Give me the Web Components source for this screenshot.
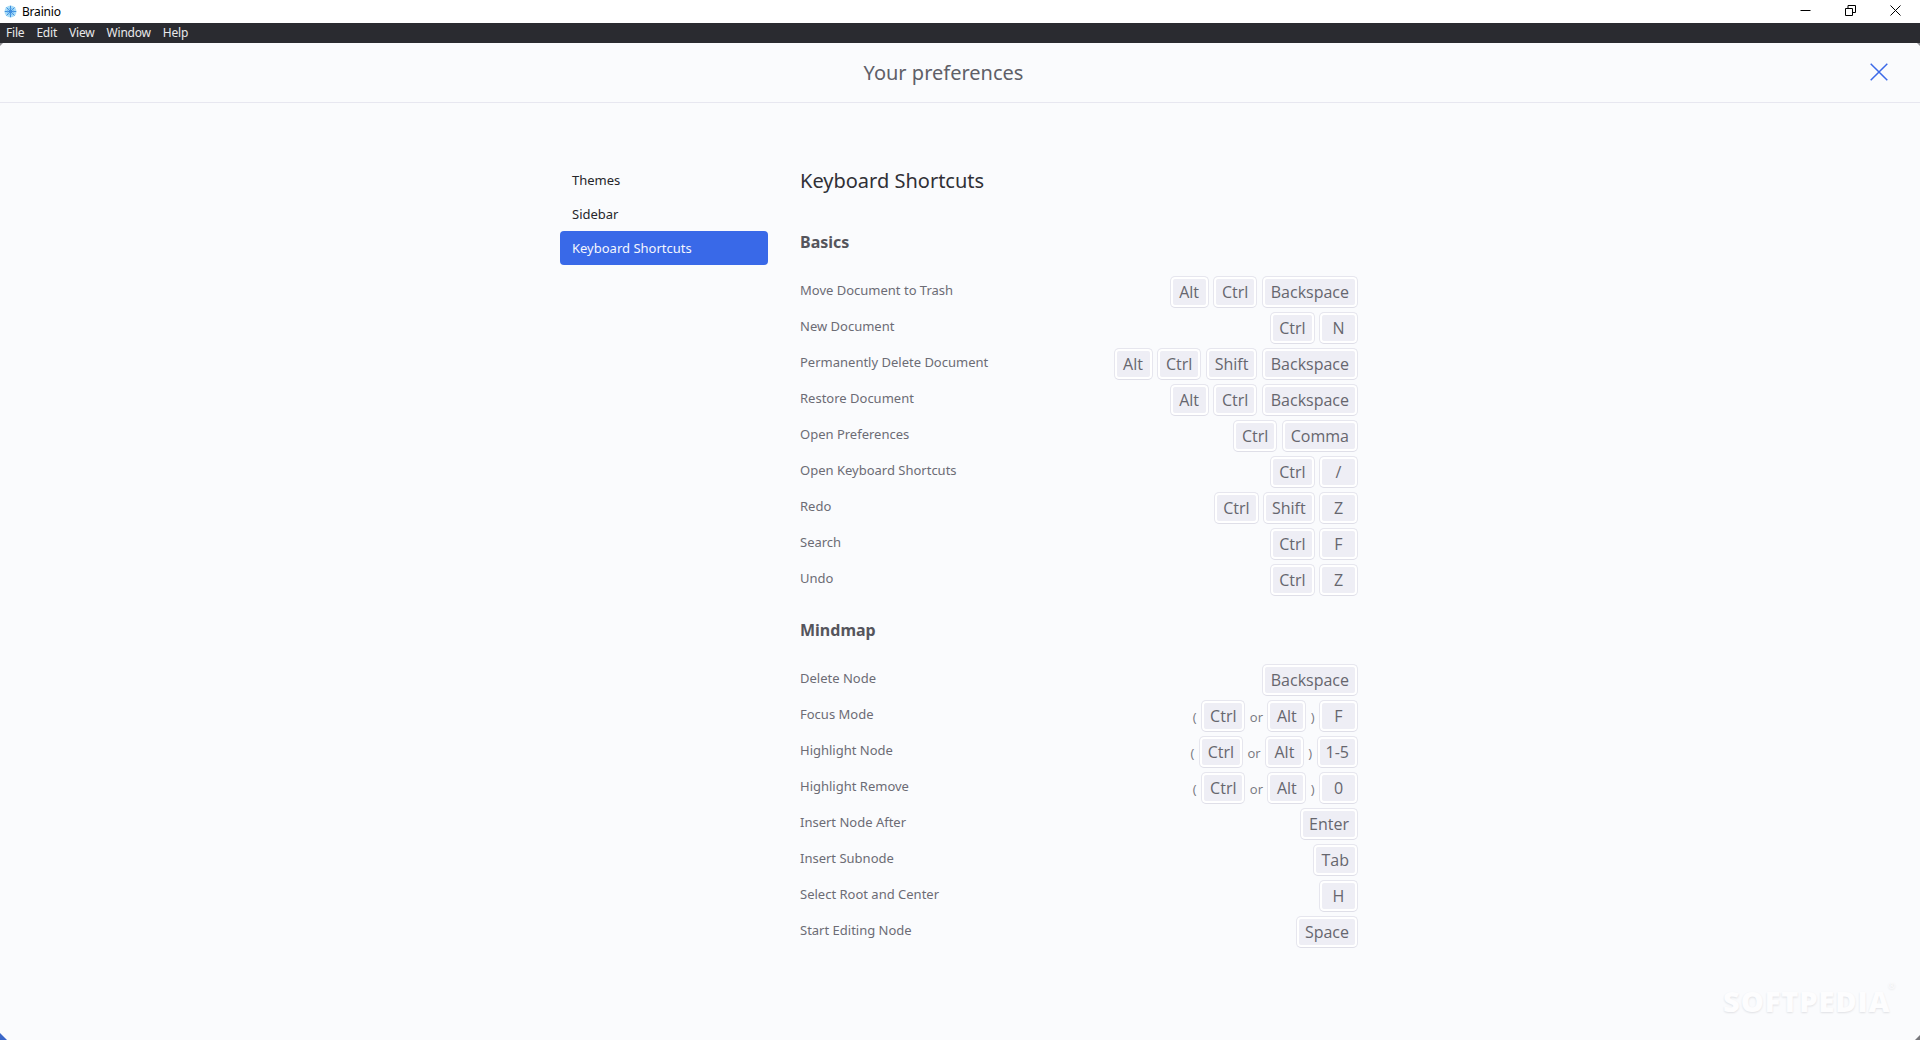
<!DOCTYPE html>
<html lang="en"><head><meta charset="utf-8"><title>Brainio</title>
<style>
html,body{margin:0;padding:0;height:1040px;overflow:hidden;background:#fff;font-family:"Noto Sans","Open Sans",sans-serif}
body{display:flex;flex-direction:column}
</style></head><body>
<app-titlebar>Brainio</app-titlebar>
<app-menubar><span>File</span><span>Edit</span><span>View</span><span>Window</span><span>Help</span></app-menubar>
<prefs-window>
  <prefs-header>Your preferences</prefs-header>
  <prefs-body>
    <prefs-nav>
      <nav-item>Themes</nav-item>
      <nav-item>Sidebar</nav-item>
      <nav-item active>Keyboard Shortcuts</nav-item>
    </prefs-nav>
    <prefs-content>
      <page-title>Keyboard Shortcuts</page-title>
      <shortcut-section heading="Basics">
        <shortcut-row label="Move Document to Trash"><key-cap>Alt</key-cap><key-cap>Ctrl</key-cap><key-cap>Backspace</key-cap></shortcut-row>
        <shortcut-row label="New Document"><key-cap>Ctrl</key-cap><key-cap>N</key-cap></shortcut-row>
        <shortcut-row label="Permanently Delete Document"><key-cap>Alt</key-cap><key-cap>Ctrl</key-cap><key-cap>Shift</key-cap><key-cap>Backspace</key-cap></shortcut-row>
        <shortcut-row label="Restore Document"><key-cap>Alt</key-cap><key-cap>Ctrl</key-cap><key-cap>Backspace</key-cap></shortcut-row>
        <shortcut-row label="Open Preferences"><key-cap>Ctrl</key-cap><key-cap>Comma</key-cap></shortcut-row>
        <shortcut-row label="Open Keyboard Shortcuts"><key-cap>Ctrl</key-cap><key-cap>/</key-cap></shortcut-row>
        <shortcut-row label="Redo"><key-cap>Ctrl</key-cap><key-cap>Shift</key-cap><key-cap>Z</key-cap></shortcut-row>
        <shortcut-row label="Search"><key-cap>Ctrl</key-cap><key-cap>F</key-cap></shortcut-row>
        <shortcut-row label="Undo"><key-cap>Ctrl</key-cap><key-cap>Z</key-cap></shortcut-row>
      </shortcut-section>
      <shortcut-section heading="Mindmap">
        <shortcut-row label="Delete Node"><key-cap>Backspace</key-cap></shortcut-row>
        <shortcut-row label="Focus Mode"><key-sep>(</key-sep><key-cap>Ctrl</key-cap><key-sep>or</key-sep><key-cap>Alt</key-cap><key-sep>)</key-sep><key-cap>F</key-cap></shortcut-row>
        <shortcut-row label="Highlight Node"><key-sep>(</key-sep><key-cap>Ctrl</key-cap><key-sep>or</key-sep><key-cap>Alt</key-cap><key-sep>)</key-sep><key-cap>1-5</key-cap></shortcut-row>
        <shortcut-row label="Highlight Remove"><key-sep>(</key-sep><key-cap>Ctrl</key-cap><key-sep>or</key-sep><key-cap>Alt</key-cap><key-sep>)</key-sep><key-cap>0</key-cap></shortcut-row>
        <shortcut-row label="Insert Node After"><key-cap>Enter</key-cap></shortcut-row>
        <shortcut-row label="Insert Subnode"><key-cap>Tab</key-cap></shortcut-row>
        <shortcut-row label="Select Root and Center"><key-cap>H</key-cap></shortcut-row>
        <shortcut-row label="Start Editing Node"><key-cap>Space</key-cap></shortcut-row>
      </shortcut-section>
    </prefs-content>
  </prefs-body>
  <soft-mark>SOFTPEDIA<sup>®</sup></soft-mark>
</prefs-window>
<script>
function def(name, html, init){
  customElements.define(name, class extends HTMLElement{
    constructor(){super();this.attachShadow({mode:"open"}).innerHTML=html;}
    connectedCallback(){ if(init) init(this); }
  });
}
def("app-titlebar",`<style>
:host{display:flex;align-items:center;height:23px;flex:none;background:#fff;color:#000;font:12px/23px "Noto Sans",sans-serif}
.logo{width:13px;height:13px;margin:-1px 5px 0 4px;flex:none}
.t{flex:1;letter-spacing:-.2px}
.b{width:45px;height:23px;display:flex;align-items:center;justify-content:center}
.b svg{width:11px;height:11px;display:block;margin-top:-3px}
.w{display:flex;padding-right:2.5px}
</style>
<svg class="logo" viewBox="0 0 13 13"><circle cx="6.5" cy="6.5" r="6" fill="#a8dcf7"/><path d="M6.5 .8v11.400M.8 6.500h11.400M2.500 2.500l8 8M10.500 2.500l-8 8" stroke="#3f8fe0" stroke-width="1" fill="none"/><circle cx="6.500" cy="6.500" r="3" fill="none" stroke="#5aa6ea" stroke-width=".8"/></svg>
<span class="t"><slot></slot></span>
<div class="w">
<div class="b"><svg viewBox="0 0 11 11"><path d="M.5 5.500h10" stroke="#000" fill="none"/></svg></div>
<div class="b"><svg viewBox="0 0 11 11"><path d="M.5 3.500h7v7h-7zM3 3.500V.5h7.500v7H7.500" stroke="#000" fill="none"/></svg></div>
<div class="b"><svg viewBox="0 0 11 11"><path d="M.5 .5l10 10M10.500 .5l-10 10" stroke="#000" fill="none"/></svg></div>
</div>`);
def("app-menubar",`<style>
:host{display:flex;height:20px;flex:none;background:#2a2b30;color:#e8e8ea;font:12px/20px "Noto Sans",sans-serif;padding-left:6px;gap:12px;letter-spacing:-.2px}
::slotted(span){display:block}
</style><slot></slot>`);
def("prefs-window",`<style>
:host{display:flex;flex-direction:column;flex:1;min-height:0;background:#fafbfd;position:relative;overflow:hidden}
i{position:absolute;display:block}
.tl{left:0;top:0;width:3px;height:3px;background:#8f8f94;clip-path:polygon(0 0,100% 0,0 100%)}
.tr{right:0;top:0;width:3px;height:3px;background:#8f8f94;clip-path:polygon(0 0,100% 0,100% 100%)}
.br{right:0;bottom:0;width:5px;height:5px;background:#77777c;clip-path:polygon(100% 0,100% 100%,0 100%)}
.bl{left:0;bottom:0;width:7px;height:7px;background:#3a66c8;clip-path:polygon(0 0,100% 100%,0 100%)}
</style><slot></slot><i class="tl"></i><i class="tr"></i><i class="br"></i><i class="bl"></i>`);
def("prefs-header",`<style>
:host{display:flex;align-items:center;justify-content:center;height:60px;flex:none;box-sizing:border-box;border-bottom:1px solid #e7e7f0;color:#5f5f68;font:20px "Noto Sans",sans-serif;position:relative}
svg{position:absolute;right:32px;top:20px;width:18px;height:18px}
span{display:block;margin-left:-33px}
</style><span><slot></slot></span><svg viewBox="0 0 18 18"><path d="M.7 .7l16.600 16.600M17.300 .7L.7 17.300" stroke="#3b69e8" stroke-width="1.500" fill="none"/></svg>`);
def("prefs-body",`<style>
:host{display:flex;flex:1;min-height:0;padding:60px 0 0 560px;gap:32px}
</style><slot></slot>`);
def("prefs-nav",`<style>
:host{display:block;width:208px;flex:none}
</style><slot></slot>`);
def("nav-item",`<style>
:host{display:block;height:34px;box-sizing:border-box;padding:0 12px;border-radius:4px;color:#26262b;font:13px/34px "Noto Sans",sans-serif}
:host([active]){background:#3969e8;color:#f4f6fe}
</style><slot></slot>`);
def("prefs-content",`<style>
:host{display:block;width:558px;flex:none}
</style><slot></slot>`);
def("page-title",`<style>
:host{display:block;height:36px;margin-bottom:28px;color:#303036;font:20px/36px "Noto Sans",sans-serif}
</style><slot></slot>`);
def("shortcut-section",`<style>
:host{display:block;margin-top:17px}
h2{margin:0 0 17px;color:#55555c;font:700 16px/30px "Noto Sans",sans-serif}
</style><h2></h2><slot></slot>`, el=>{el.shadowRoot.querySelector("h2").textContent=el.getAttribute("heading");});
def("shortcut-row",`<style>
:host{display:flex;align-items:center;height:36px}
.l{flex:1;color:#6c6c75;font:13px/32px "Noto Sans",sans-serif;margin-top:-4px}
.k{display:flex;align-items:center;gap:4.4px}
</style><span class="l"></span><div class="k"><slot></slot></div>`, el=>{el.shadowRoot.querySelector(".l").textContent=el.getAttribute("label");});
def("key-cap",`<style>
:host{display:block;box-sizing:border-box;height:32px;min-width:39px;padding:0 8px;text-align:center;background:#eeeef5;border:1px solid #e6e6ee;border-bottom-color:#dfdfe8;border-radius:5px;box-shadow:inset 0 0 0 2px #fff;color:#66666e;font:16px/30px "Open Sans",sans-serif}
</style><slot></slot>`);
def("key-sep",`<style>
:host{display:block;color:#77777f;font:13px/32px "Open Sans",sans-serif;margin-top:1px}
</style><slot></slot>`);
def("soft-mark",`<style>
:host{position:absolute;left:1723px;top:943px;color:#fdfdfe;font:800 29px/30px "Open Sans",sans-serif;letter-spacing:.9px;text-shadow:0 1px 2px #dfe0e4}
::slotted(sup){position:absolute;left:165px;top:-6px;font-size:9px;line-height:12px;font-weight:400}
</style><slot></slot>`);
</script>
</body></html>
